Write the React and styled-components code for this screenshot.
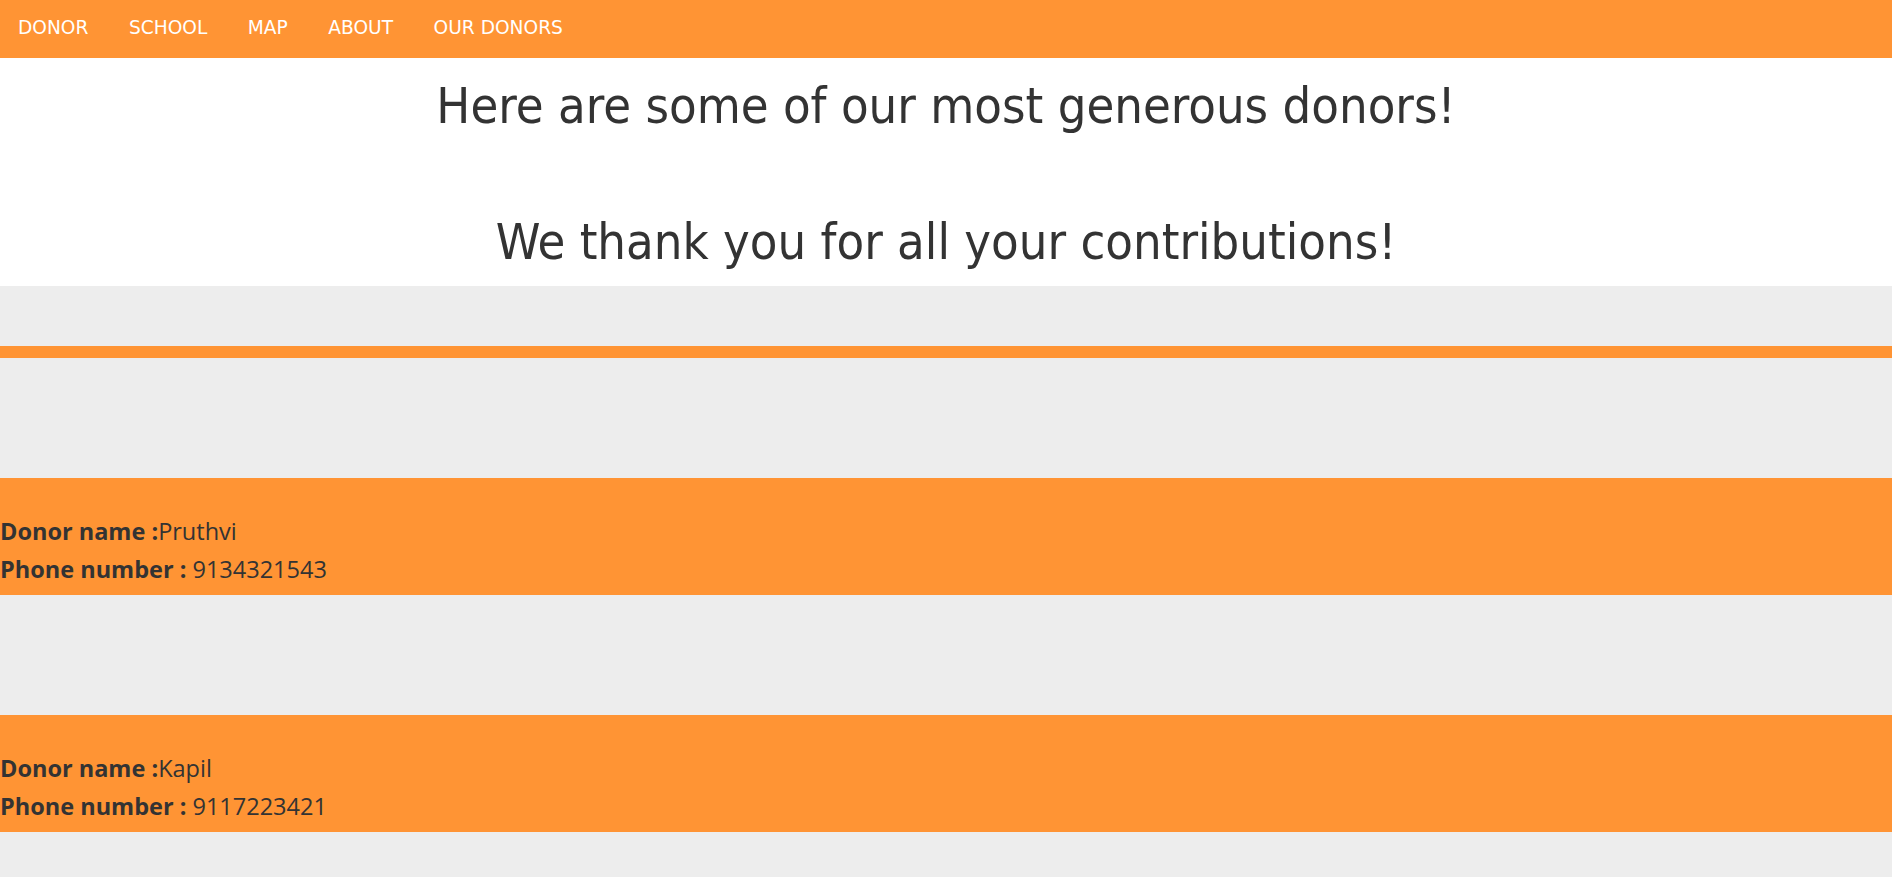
import styled, { createGlobalStyle } from "styled-components";

const Global = createGlobalStyle`
html, body {
  margin: 0;
  padding: 0;
  background: #ededed;
}
`;

const Nav = styled.nav`
display: flex;
align-items: center;
height: 58px;
box-sizing: border-box;
padding: 0 0 4px 18px;
background: #ff9434;
gap: 40.5px;
`;
const NavItem = styled.a`
color: white;
font-family: "DejaVu Sans", Tahoma, sans-serif;
font-size: 18.6px;
text-decoration: none;
`;
const Hero = styled.div`
background: white;
display: flex;
flex-direction: column;
align-items: center;
height: 228px;
padding-top: 20px;
box-sizing: border-box;
gap: 80px;
`;
const Title = styled.h1`
margin: 0;
font-family: "DejaVu Sans", Tahoma, sans-serif;
font-stretch: condensed;
font-weight: normal;
font-size: 50.3px;
line-height: 56px;
color: #333;
`;
const Stripe = styled.div`
height: 12px;
background: #ff9434;
margin-top: 60px;
`;
const List = styled.div`
display: flex;
flex-direction: column;
gap: 120px;
padding-top: 120px;
padding-bottom: 60px;
`;
const Card = styled.div`
background: #ff9434;
height: 117px;
padding-top: 34px;
box-sizing: border-box;
font-family: "Open Sans", "Noto Sans", sans-serif;
font-size: 23.5px;
line-height: 38px;
color: #333;
`;
const Label = styled.b`
font-weight: 700;
`;

const donors = [
  { name: "Pruthvi", phone: "9134321543" },
  { name: "Kapil", phone: "9117223421" },
];

export default function App() {
  return (
    <div>
      <Global />
      <Nav>
        {["DONOR", "SCHOOL", "MAP", "ABOUT", "OUR DONORS"].map((t) => (
          <NavItem key={t} href="#">{t}</NavItem>
        ))}
      </Nav>
      <Hero>
        <Title>Here are some of our most generous donors!</Title>
        <Title>We thank you for all your contributions!</Title>
      </Hero>
      <Stripe />
      <List>
        {donors.map((d) => (
          <Card key={d.name}>
            <div><Label>Donor name :</Label>{d.name}</div>
            <div><Label>Phone number : </Label>{d.phone}</div>
          </Card>
        ))}
      </List>
    </div>
  );
}
